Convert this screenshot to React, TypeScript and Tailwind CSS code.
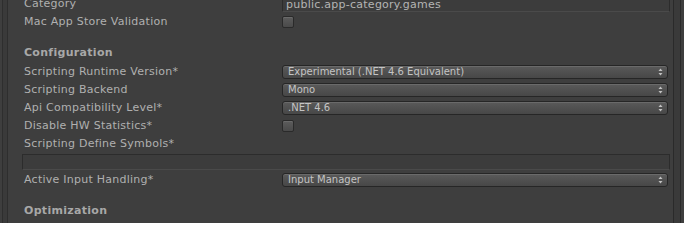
import React from 'react';

type Row =
  | { kind: 'text'; label: string; value: string }
  | { kind: 'check'; label: string }
  | { kind: 'popup'; label: string; value: string }
  | { kind: 'header'; label: string }
  | { kind: 'label'; label: string }
  | { kind: 'field' };

const rows: Row[] = [
  { kind: 'text', label: 'Category', value: 'public.app-category.games' },
  { kind: 'check', label: 'Mac App Store Validation' },
  { kind: 'header', label: 'Configuration' },
  { kind: 'popup', label: 'Scripting Runtime Version*', value: 'Experimental (.NET 4.6 Equivalent)' },
  { kind: 'popup', label: 'Scripting Backend', value: 'Mono' },
  { kind: 'popup', label: 'Api Compatibility Level*', value: '.NET 4.6' },
  { kind: 'check', label: 'Disable HW Statistics*' },
  { kind: 'label', label: 'Scripting Define Symbols*' },
  { kind: 'field' },
  { kind: 'popup', label: 'Active Input Handling*', value: 'Input Manager' },
  { kind: 'header', label: 'Optimization' },
];

function Arrows() {
  return (
    <svg width="5" height="8" viewBox="0 0 5 8" className="shrink-0">
      <path d="M2.5 0.5 L4.5 3 L0.5 3 Z" fill="#c4c4c4" />
      <path d="M2.5 7.5 L4.5 5 L0.5 5 Z" fill="#c4c4c4" />
    </svg>
  );
}

function Popup({ value }: { value: string }) {
  return (
    <div className="flex items-center justify-between h-[14px] mr-[2px] pl-[5px] pr-[4px] rounded-[3px] border border-[#262626] bg-gradient-to-b from-[#5a5a5a] to-[#474747] shadow-[inset_0_1px_0_#6a6a6a] text-[10px] leading-none text-[#c4c4c4]">
      <span>{value}</span>
      <Arrows />
    </div>
  );
}

function Checkbox() {
  return (
    <div className="w-[12px] h-[12px] rounded-[2px] border border-[#2a2a2a] bg-gradient-to-b from-[#5c5c5c] to-[#4a4a4a] shadow-[inset_0_1px_0_#6a6a6a]" />
  );
}

function TextField({ value }: { value?: string }) {
  return (
    <div className="h-[16px] flex items-center px-[3px] border border-[#2c2c2c] border-b-[#4a4a4a] bg-[#3c3c3c] text-[11px] leading-none text-[#b4b4b4] tracking-[0.25px]">
      {value}
    </div>
  );
}

function InspectorRow({ row }: { row: Row }) {
  if (row.kind === 'header') {
    return (
      <div className="flex items-center h-[18px] mt-[13px] mb-[1px] pl-[16px] font-bold text-[11px] text-[#a8a8a8] tracking-[0.3px]">
        {row.label}
      </div>
    );
  }
  if (row.kind === 'field') {
    return (
      <div className="pl-[14px] pr-[3px] mt-[1px] mb-[1px]">
        <TextField />
      </div>
    );
  }
  return (
    <div className="flex items-center h-[18px]">
      <div className="w-[274px] shrink-0 pl-[16px] text-[11px] text-[#b0b0b0] tracking-[0.25px] whitespace-nowrap">
        {row.label}
      </div>
      <div className="flex-1 pr-[3px]">
        {row.kind === 'popup' && <Popup value={row.value} />}
        {row.kind === 'check' && <Checkbox />}
        {row.kind === 'text' && <TextField value={row.value} />}
      </div>
    </div>
  );
}

export default function App() {
  return (
    <div
      className="w-[684px] h-[223px] overflow-hidden flex bg-[#3e3e3e]"
      style={{ fontFamily: '"DejaVu Sans", "Liberation Sans", sans-serif' }}
    >
      <div className="w-[8px] shrink-0 flex">
        <div className="w-[2px]" />
        <div className="w-px bg-[#2e2e2e]" />
        <div className="w-[4px] bg-[#3a3a3a]" />
        <div className="w-px bg-[#2e2e2e]" />
      </div>
      <div className="flex-1 -mt-[5px]">
        {rows.map((row, i) => (
          <InspectorRow key={i} row={row} />
        ))}
      </div>
      <div className="w-[11px] shrink-0 flex">
        <div className="w-px bg-[#2a2a2a]" />
        <div className="w-[6px] bg-[#3a3a3a]" />
        <div className="w-px bg-[#2a2a2a]" />
        <div className="w-[3px]" />
      </div>
    </div>
  );
}
